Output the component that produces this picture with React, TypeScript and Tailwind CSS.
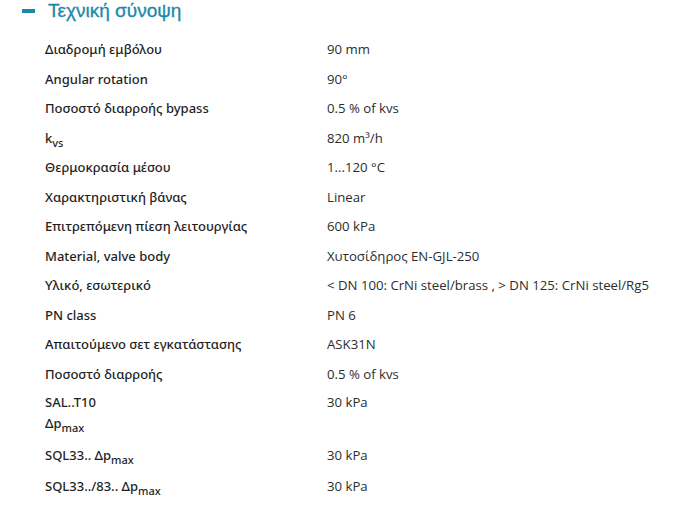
import React from "react";

type Row = { label: React.ReactNode; value: React.ReactNode; cls?: string; lh?: string };

const Sub = ({ children }: { children: React.ReactNode }) => (
  <span className="relative top-[4px] text-[11px] leading-none">{children}</span>
);

const rows: Row[] = [
  { label: "Διαδρομή εμβόλου", value: "90 mm" },
  { label: "Angular rotation", value: "90°" },
  { label: "Ποσοστό διαρροής bypass", value: "0.5 % of kvs" },
  { label: <>k<Sub>vs</Sub></>, value: <>820 m³/h</> },
  { label: "Θερμοκρασία μέσου", value: "1...120 °C" },
  { label: "Χαρακτηριστική βάνας", value: "Linear" },
  { label: "Επιτρεπόμενη πίεση λειτουργίας", value: "600 kPa" },
  { label: "Material, valve body", value: "Χυτοσίδηρος EN-GJL-250" },
  { label: "Υλικό, εσωτερικό", value: "< DN 100: CrNi steel/brass , > DN 125: CrNi steel/Rg5" },
  { label: "PN class", value: "PN 6" },
  { label: "Απαιτούμενο σετ εγκατάστασης", value: "ASK31N" },
  { label: "Ποσοστό διαρροής", value: "0.5 % of kvs" },
  { label: <>SAL..T10<br />Δp<Sub>max</Sub></>, value: "30 kPa", cls: "flex pt-[3px] pb-[7px]", lh: "leading-[21px]" },
  { label: <>SQL33.. Δp<Sub>max</Sub></>, value: "30 kPa", cls: "flex pt-[4px] pb-[5px]" },
  { label: <>SQL33../83.. Δp<Sub>max</Sub></>, value: "30 kPa" },
];

export default function App() {
  return (
    <div className="w-[682px] h-[510px] bg-white overflow-hidden">
      <div className="flex items-center pl-[22px] h-[20px] pt-[1px]">
        <span className="block w-[13px] h-[4px] bg-[#1b88a8]" />
        <span
          className="ml-[13px] text-[19px] leading-[20px] text-[#1b88a8]"
          style={{ fontFamily: '"Liberation Sans", sans-serif', WebkitTextStroke: "0.3px #1b88a8" }}
        >
          Τεχνική σύνοψη
        </span>
      </div>
      <div className="pt-[15px] pl-[45px]">
        {rows.map((r, i) => (
          <div key={i} className={r.cls ?? "flex py-[4px]"}>
            <div
              className={`w-[282px] shrink-0 text-[13px] ${r.lh ?? "leading-[21.5px]"} font-medium text-[#1f1f1f]`}
              style={{ fontFamily: '"Noto Sans", sans-serif' }}
            >
              {r.label}
            </div>
            <div
              className="text-[13.2px] leading-[21.5px] text-[#2d2d2d]"
              style={{ fontFamily: '"Open Sans", sans-serif' }}
            >
              {r.value}
            </div>
          </div>
        ))}
      </div>
    </div>
  );
}
